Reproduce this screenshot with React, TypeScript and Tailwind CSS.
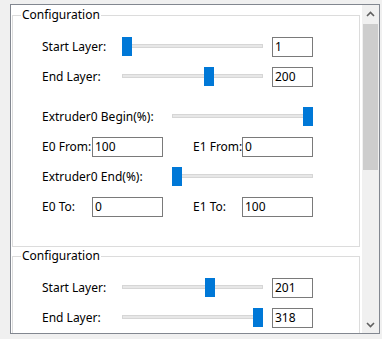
import React from 'react'

const FONT = { fontFamily: '"Noto Sans", "Liberation Sans", sans-serif' }

function Slider({ value, min, max, width }: { value: number; min: number; max: number; width: number }) {
  const left = Math.round(((value - min) / (max - min)) * (width - 10))
  return (
    <div className="relative h-5 shrink-0" style={{ width }}>
      <div className="absolute left-0 right-0 top-[7px] h-[4px] border border-[#d6d6d6] bg-[#e7e7e7]" />
      <div className="absolute top-0 h-[19px] w-[10px] bg-[#0078d7]" style={{ left }} />
    </div>
  )
}

function Field({ value, w }: { value: string; w: string }) {
  return (
    <div className={`flex h-5 shrink-0 items-center border border-[#7a7a7a] bg-white pl-[2px] text-[12px] text-black ${w}`}>
      {value}
    </div>
  )
}

function Group({ start, end, full }: { start: number; end: number; full?: boolean }) {
  return (
    <fieldset className={`ml-[1px] w-[348px] border border-[#dcdcdc] pl-[29px] pt-[14px] ${full ? 'pb-[29px]' : 'pb-[200px]'}`}>
      <legend className="-ml-[21px] px-[1px] text-[12px] leading-[16px] text-black">Configuration</legend>
      <div className="flex h-5 items-center">
        <span className="w-[80px] shrink-0">Start Layer:</span>
        <Slider value={start} min={1} max={318} width={141} />
        <div className="w-[9px] shrink-0" />
        <Field value={String(start)} w="w-[41px]" />
      </div>
      <div className="mt-[10px] flex h-5 items-center">
        <span className="w-[80px] shrink-0">End Layer:</span>
        <Slider value={end} min={1} max={318} width={141} />
        <div className="w-[9px] shrink-0" />
        <Field value={String(end)} w="w-[41px]" />
      </div>
      {full && (
        <>
          <div className="mt-[20px] flex h-5 items-center">
            <span className="w-[130px] shrink-0">Extruder0 Begin(%):</span>
            <Slider value={100} min={0} max={100} width={141} />
          </div>
          <div className="mt-[10px] flex h-5 items-center">
            <span className="w-[50px] shrink-0 whitespace-nowrap">E0 From:</span>
            <Field value="100" w="w-[71px]" />
            <span className="ml-[30px] w-[49px] shrink-0 whitespace-nowrap">E1 From:</span>
            <Field value="0" w="w-[71px]" />
          </div>
          <div className="mt-[10px] flex h-5 items-center">
            <span className="w-[130px] shrink-0">Extruder0 End(%):</span>
            <Slider value={0} min={0} max={100} width={141} />
          </div>
          <div className="mt-[10px] flex h-5 items-center">
            <span className="w-[50px] shrink-0">E0 To:</span>
            <Field value="0" w="w-[71px]" />
            <span className="ml-[30px] w-[49px] shrink-0">E1 To:</span>
            <Field value="100" w="w-[71px]" />
          </div>
        </>
      )}
    </fieldset>
  )
}

function Chevron({ up }: { up?: boolean }) {
  return (
    <svg width="9" height="6" viewBox="0 0 9 6">
      <path
        d={up ? 'M1 5 L4.5 1.5 L8 5' : 'M1 1 L4.5 4.5 L8 1'}
        fill="none"
        stroke="#606060"
        strokeWidth="1.6"
      />
    </svg>
  )
}

export default function App() {
  return (
    <div className="h-[339px] w-[382px] overflow-hidden bg-[#f0f0f0] pl-[10px] pt-[4px] text-[12px] text-black" style={FONT}>
      <div className="flex h-[330px] w-[370px] border border-[#828790] bg-white">
        <div className="h-full w-[351px] overflow-hidden pt-[2px]">
          <Group start={1} end={200} full />
          <div className="mt-[1px]">
            <Group start={201} end={318} />
          </div>
        </div>
        <div className="flex h-full w-[17px] shrink-0 flex-col bg-[#f0f0f0]">
          <div className="flex h-[17px] items-center justify-center">
            <Chevron up />
          </div>
          <div className="mx-[1px] mt-[2px] h-[146px] bg-[#cdcdcd]" />
          <div className="flex-1" />
          <div className="flex h-[17px] items-center justify-center">
            <Chevron />
          </div>
        </div>
      </div>
    </div>
  )
}
